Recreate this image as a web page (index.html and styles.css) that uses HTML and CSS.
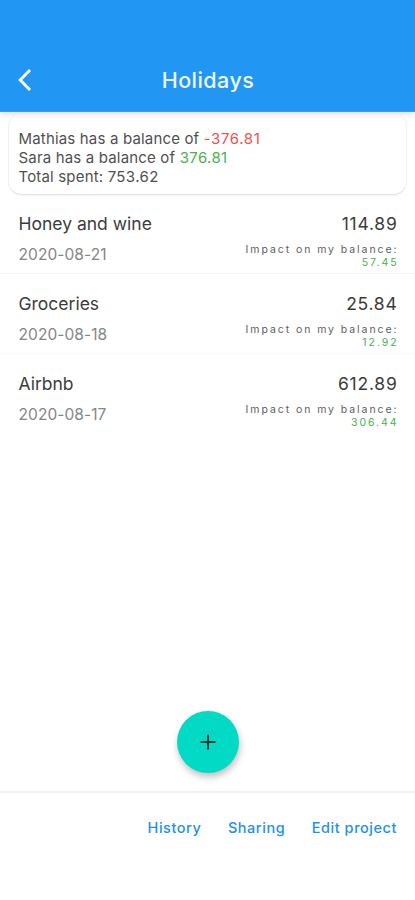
FILE: index.html
```html
<!DOCTYPE html>
<html lang="en">
<head>
<meta charset="utf-8">
<title>Holidays</title>
<link rel="stylesheet" href="styles.css">
</head>
<body>
<div class="screen">
  <header class="app-bar">
    <svg class="back" width="20" height="26" viewBox="0 0 20 26" fill="none"><path d="M14 3 4.200 13l9.800 10" stroke="#fff" stroke-width="2.900"/></svg>
    <h1 class="title">Holidays</h1>
    <span class="spacer"></span>
  </header>
  <main class="content">
    <section class="summary">
      <p>Mathias has a balance of <span class="negative">-376.81</span></p>
      <p>Sara has a balance of <span class="positive">376.81</span></p>
      <p>Total spent: <span class="total">753.62</span></p>
    </section>
    <ul class="expenses">
      <li class="expense">
        <div class="top"><span>Honey and wine</span><span class="amount">114.89</span></div>
        <div class="bottom"><span class="date">2020-08-21</span><div class="impact">Impact on my balance:<br><span class="positive">57.45</span></div></div>
      </li>
      <li class="expense">
        <div class="top"><span>Groceries</span><span class="amount">25.84</span></div>
        <div class="bottom"><span class="date">2020-08-18</span><div class="impact">Impact on my balance:<br><span class="positive">12.92</span></div></div>
      </li>
      <li class="expense">
        <div class="top"><span>Airbnb</span><span class="amount">612.89</span></div>
        <div class="bottom"><span class="date">2020-08-17</span><div class="impact">Impact on my balance:<br><span class="positive">306.44</span></div></div>
      </li>
    </ul>
    <button class="fab" aria-label="Add expense"><svg width="18" height="18" viewBox="0 0 18 18"><path d="M9 1.500v15M1.500 9h15" stroke="#103c38" stroke-width="2"/></svg></button>
  </main>
  <footer class="actions">
    <a>History</a><a>Sharing</a><a>Edit project</a>
  </footer>
</div>
</body>
</html>
```
FILE: styles.css
```css
* { box-sizing: border-box; }
body { margin: 0; background: #fff; color: #3c3c3c; font-family: Inter, "Liberation Sans", sans-serif; }
p, h1, ul { margin: 0; padding: 0; }
.screen { width: 415px; height: 900px; display: flex; flex-direction: column; overflow: hidden; }
.app-bar {
  height: 112px; flex: none; padding: 49px 16px 0; display: flex; align-items: center;
  background: #2196f3; border-bottom: 1px solid #3a9cec; z-index: 1;
  box-shadow: 0 1px 7px rgba(60, 30, 10, .2);
}
.back { flex: none; }
.title { flex: 1; text-align: center; font-size: 21.500px; line-height: 28px; font-weight: 500; letter-spacing: .45px; color: #eef8ff; }
.spacer { width: 19px; }
.content { flex: 1; display: flex; flex-direction: column; align-items: center; }
.summary {
  width: 399px; height: 82px; margin-top: 1px; padding: 16px 9.500px 0;
  border: 1px solid #f0f0f0; border-top: 0; border-bottom-color: #e4e4e4; border-radius: 14px;
  box-shadow: 0 1px 1px rgba(0, 0, 0, .05);
  font-size: 15px; line-height: 19px; letter-spacing: .17px; color: #505050;
}
.summary span { letter-spacing: .38px; }
.summary .negative { letter-spacing: .6px; }
.negative { color: #ee5350; }
.positive { color: #4caf50; }
.expenses { list-style: none; width: 100%; margin-top: -1px; }
.expense { height: 80px; padding: 18px 18px 0; border-bottom: 1px solid #f4f4f4; }
.expense:nth-child(2) { border-bottom-color: #f9f9f9; }
.expense:last-child { border-bottom: 0; }
.top { display: flex; justify-content: space-between; font-size: 17.500px; line-height: 24px; letter-spacing: 0; }
.top span:first-child { padding-left: .5px; }
.amount { letter-spacing: .75px; margin-right: -.5px; }
.bottom { display: flex; justify-content: space-between; }
.date { margin-top: 9px; padding-left: .5px; font-size: 15.500px; line-height: 20px; letter-spacing: .08px; color: #858585; }
.impact { margin-top: 7px; margin-right: -1.500px; text-align: right; font-size: 10.500px; line-height: 13px; letter-spacing: 1.930px; color: #606060; }
.fab {
  width: 62px; height: 62px; margin: auto 0 18px; padding: 0; border: 0; border-radius: 50%;
  display: flex; align-items: center; justify-content: center; background: #03dac6;
  box-shadow: 1px 4px 7px rgba(0, 0, 0, .25);
}
.actions {
  height: 109px; flex: none; padding: 25px 18px 0; display: flex; justify-content: flex-end; gap: 26.500px;
  border-top: 2px solid #f0f0f0; color: #2391e8; font-size: 14.500px; line-height: 20px; font-weight: 500; letter-spacing: .55px;
}
```
